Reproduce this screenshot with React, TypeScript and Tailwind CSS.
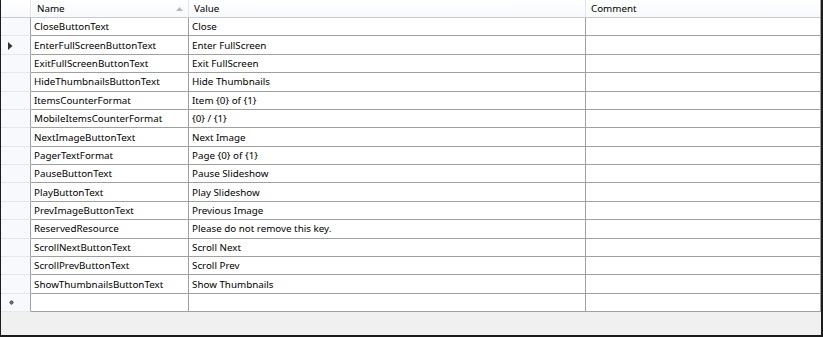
import React from "react";

const rows: [string, string][] = [
  ["CloseButtonText", "Close"],
  ["EnterFullScreenButtonText", "Enter FullScreen"],
  ["ExitFullScreenButtonText", "Exit FullScreen"],
  ["HideThumbnailsButtonText", "Hide Thumbnails"],
  ["ItemsCounterFormat", "Item {0} of {1}"],
  ["MobileItemsCounterFormat", "{0} / {1}"],
  ["NextImageButtonText", "Next Image"],
  ["PagerTextFormat", "Page {0} of {1}"],
  ["PauseButtonText", "Pause Slideshow"],
  ["PlayButtonText", "Play Slideshow"],
  ["PrevImageButtonText", "Previous Image"],
  ["ReservedResource", "Please do not remove this key."],
  ["ScrollNextButtonText", "Scroll Next"],
  ["ScrollPrevButtonText", "Scroll Prev"],
  ["ShowThumbnailsButtonText", "Show Thumbnails"],
];

function RowHeader({ kind }: { kind?: "current" | "new" }) {
  return (
    <div className="w-[30px] shrink-0 h-full bg-[#f7f9fc] border-r border-[#a0a0a0] border-b border-b-[#e3e6ea] flex items-center">
      {kind === "current" && (
        <svg width="5" height="8" viewBox="0 0 5 8" className="ml-[7px] mt-[1px]">
          <path d="M0 0 L4.5 4 L0 8 Z" fill="#333" />
        </svg>
      )}
      {kind === "new" && (
        <svg width="5" height="5" viewBox="0 0 5 5" className="ml-[8px] mt-[1px]">
          <circle cx="2.5" cy="2.5" r="1.9" fill="#555" />
          <path d="M2.5 0 V5 M0 2.5 H5" stroke="#777" strokeWidth="0.8" />
        </svg>
      )}
    </div>
  );
}

export default function App() {
  return (
    <div
      className="w-[823px] h-[337px] bg-[#f0f0f0] border-l border-r-2 border-b-2 border-[#1c1c1c] flex flex-col text-[9.8px] text-black"
      style={{ fontFamily: '"Noto Sans", "Open Sans", sans-serif' }}
    >
      <div className="w-[820px] bg-white border-r border-[#a0a0a0] flex flex-col">
        {/* header */}
        <div className="h-[18px] flex border-b border-[#c8ccd2] bg-gradient-to-b from-white to-[#f7f9fc]">
          <div className="w-[30px] shrink-0 border-r border-[#e3e6ea]" />
          <div className="w-[158px] shrink-0 border-r border-[#e3e6ea] flex items-center pl-[6px] pr-[4px] pt-[2px]">
            <span className="flex-1">Name</span>
            <svg width="7" height="4" viewBox="0 0 7 4" className="mr-[1px] -mt-[1px]">
              <path d="M3.5 0 L7 4 L0 4 Z" fill="#b8b8b8" />
            </svg>
          </div>
          <div className="w-[397px] shrink-0 border-r border-[#e3e6ea] flex items-center pl-[5px] pt-[2px]">Value</div>
          <div className="flex-1 flex items-center pl-[5px] pt-[2px]">Comment</div>
        </div>
        {rows.map(([name, value], i) => (
          <div key={name} className="h-[18.375px] flex">
            <RowHeader kind={i === 1 ? "current" : undefined} />
            <div className="w-[158px] shrink-0 border-r border-b border-[#a0a0a0] flex items-center pl-[3px] pt-[2px] overflow-hidden whitespace-nowrap">
              {name}
            </div>
            <div className="w-[397px] shrink-0 border-r border-b border-[#a0a0a0] flex items-center pl-[3px] pt-[2px] overflow-hidden whitespace-nowrap">
              {value}
            </div>
            <div className="flex-1 border-b border-[#a0a0a0]" />
          </div>
        ))}
        <div className="h-[18.375px] flex">
          <RowHeader kind="new" />
          <div className="w-[158px] shrink-0 border-r border-b border-[#a0a0a0]" />
          <div className="w-[397px] shrink-0 border-r border-b border-[#a0a0a0]" />
          <div className="flex-1 border-b border-[#a0a0a0]" />
        </div>
      </div>
    </div>
  );
}
